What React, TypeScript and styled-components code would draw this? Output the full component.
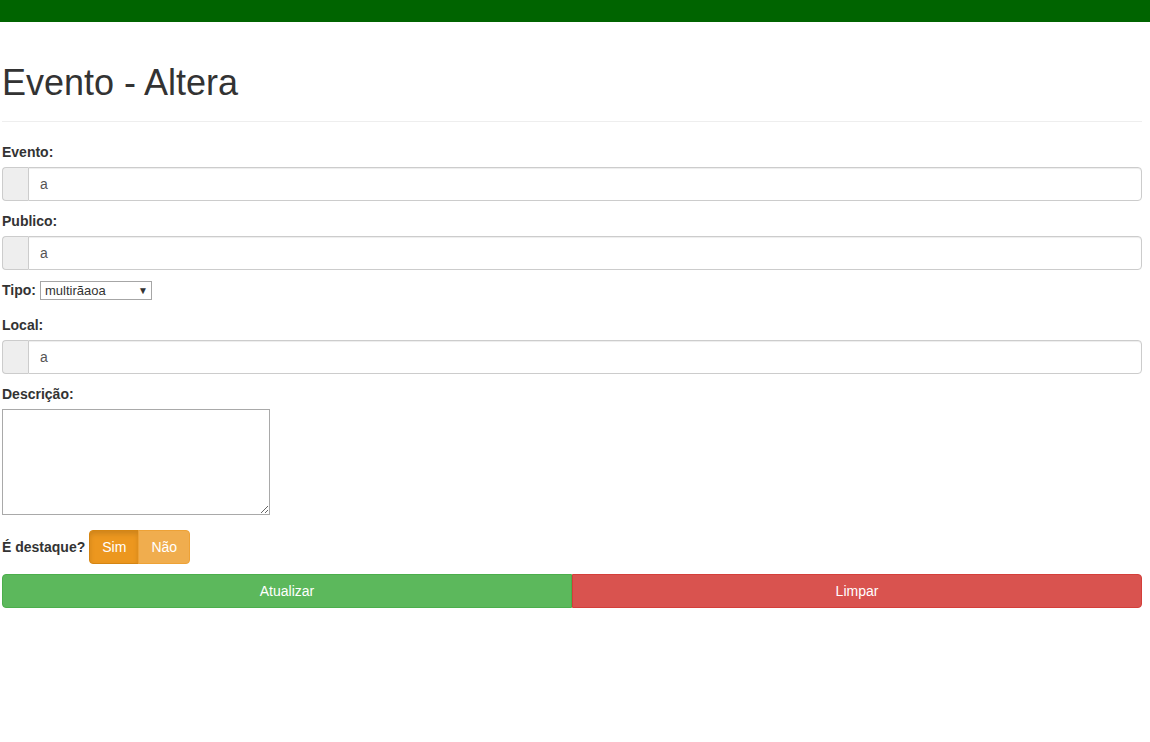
import React from "react";
import styled, { createGlobalStyle, css } from "styled-components";

const GlobalStyle = createGlobalStyle`
  *, *::before, *::after { box-sizing: border-box; }
  html, body { margin: 0; padding: 0; background: #fff; }
  body {
    font-family: "Liberation Sans", Arial, Helvetica, sans-serif;
    font-size: 14px;
    line-height: 1.42857143;
    color: #333;
  }
`;

const TopBar = styled.div`
  height: 22px;
  background: #006400;
`;

const Page = styled.main`
  padding: 0 8px 0 2px;
`;

const PageHeader = styled.header`
  margin: 40px 0 20px;
  padding-bottom: 9px;
  border-bottom: 1px solid #eee;
`;

const Title = styled.h1`
  margin: 0 0 10px;
  padding-top: 1px;
  height: 40px;
  font-size: 36px;
  font-weight: 400;
  line-height: 1.1;
  color: #333;
`;

const Form = styled.form`
  display: flex;
  flex-direction: column;
`;

const FormGroup = styled.div<{ $gap?: number }>`
  margin-bottom: ${(p) => p.$gap ?? 10}px;
`;

const Label = styled.label`
  display: inline-block;
  margin-bottom: 5px;
  font-weight: 700;
  max-width: 100%;
`;

const InputGroup = styled.div`
  display: flex;
  width: 100%;
  height: 34px;
`;

const Addon = styled.span`
  width: 26px;
  flex: 0 0 26px;
  background: #eee;
  border: 1px solid #ccc;
  border-right: 0;
  border-radius: 4px 0 0 4px;
`;

const TextInput = styled.input`
  flex: 1;
  min-width: 0;
  height: 34px;
  padding: 6px 12px 6px 11px;
  font: inherit;
  font-size: 14px;
  color: #555;
  background: #fff;
  border: 1px solid #ccc;
  border-radius: 0 4px 4px 0;
  box-shadow: inset 0 1px 1px rgba(0, 0, 0, 0.075);
  outline: none;
`;

const InlineRow = styled.div`
  display: flex;
  align-items: center;
  gap: 4px;
  height: 20px;
`;

const InlineLabel = styled.span`
  font-weight: 700;
`;

const SelectWrap = styled.span`
  position: relative;
  display: inline-flex;
`;

const Select = styled.select`
  appearance: none;
  -webkit-appearance: none;
  width: 112px;
  height: 19px;
  padding: 0 18px 0 4px;
  font-family: "Liberation Sans", Arial, sans-serif;
  font-size: 13px;
  color: #333;
  background: #fff;
  border: 1px solid #a6a6a6;
  border-radius: 0;
  outline: none;
`;

const SelectArrow = styled.span`
  position: absolute;
  right: 4px;
  top: 4px;
  font-size: 10px;
  line-height: 11px;
  color: #333;
  pointer-events: none;
`;

const TextArea = styled.textarea`
  display: block;
  width: 268px;
  height: 106px;
  margin: 0;
  padding: 2px;
  font: inherit;
  border: 1px solid #a9a9a9;
  resize: both;
  outline: none;
`;

const ToggleRow = styled.div`
  display: flex;
  align-items: center;
  gap: 4px;
  margin: 5px 0 10px;
`;

const BtnGroup = styled.div`
  display: inline-flex;
`;

const ToggleBtn = styled.button<{ $active?: boolean; $first?: boolean }>`
  height: 34px;
  padding: 6px 12px;
  font: inherit;
  font-size: 14px;
  color: #fff;
  cursor: pointer;
  border: 1px solid #eea236;
  background: #f0ad4e;
  border-radius: ${(p) => (p.$first ? "4px 0 0 4px" : "0 4px 4px 0")};
  ${(p) =>
    p.$active &&
    css`
      background: #ec971f;
      border-color: #d58512;
      box-shadow: inset 0 3px 5px rgba(0, 0, 0, 0.125);
    `}
  ${(p) => !p.$first && css`margin-left: -1px;`}
`;

const ActionRow = styled.div`
  display: grid;
  grid-template-columns: 1fr 1fr;
`;

const ActionBtn = styled.button<{ $variant: "success" | "danger" }>`
  height: 34px;
  padding: 6px 12px;
  font: inherit;
  font-size: 14px;
  color: #fff;
  cursor: pointer;
  ${(p) =>
    p.$variant === "success"
      ? css`
          background: #5cb85c;
          border: 1px solid #4cae4c;
          border-radius: 4px 0 0 4px;
        `
      : css`
          background: #d9534f;
          border: 1px solid #d43f3a;
          border-radius: 0 4px 4px 0;
        `}
`;

function TextField({ label, value }: { label: string; value: string }) {
  return (
    <FormGroup>
      <Label>{label}</Label>
      <InputGroup>
        <Addon />
        <TextInput defaultValue={value} />
      </InputGroup>
    </FormGroup>
  );
}

export default function App() {
  return (
    <>
      <GlobalStyle />
      <TopBar />
      <Page>
        <PageHeader>
          <Title>Evento - Altera</Title>
        </PageHeader>
        <Form onSubmit={(e) => e.preventDefault()}>
          <TextField label="Evento:" value="a" />
          <TextField label="Publico:" value="a" />
          <FormGroup $gap={15}>
            <InlineRow>
              <InlineLabel>Tipo:</InlineLabel>
              <SelectWrap>
                <Select defaultValue="multirãaoa">
                  <option>multirãaoa</option>
                </Select>
                <SelectArrow>▼</SelectArrow>
              </SelectWrap>
            </InlineRow>
          </FormGroup>
          <TextField label="Local:" value="a" />
          <FormGroup>
            <Label>Descrição:</Label>
            <TextArea />
          </FormGroup>
          <ToggleRow>
            <InlineLabel>É destaque?</InlineLabel>
            <BtnGroup>
              <ToggleBtn type="button" $active $first>Sim</ToggleBtn>
              <ToggleBtn type="button">Não</ToggleBtn>
            </BtnGroup>
          </ToggleRow>
          <ActionRow>
            <ActionBtn type="submit" $variant="success">Atualizar</ActionBtn>
            <ActionBtn type="reset" $variant="danger">Limpar</ActionBtn>
          </ActionRow>
        </Form>
      </Page>
    </>
  );
}
